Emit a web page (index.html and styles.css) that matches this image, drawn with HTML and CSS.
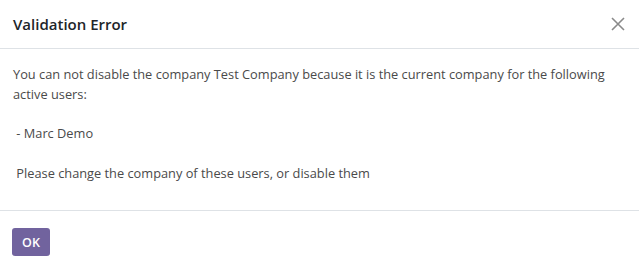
FILE: index.html
```html
<!DOCTYPE html>
<html>
<head>
<meta charset="utf-8">
<link rel="stylesheet" href="styles.css">
</head>
<body>
<div class="modal">
  <header class="modal-header">
    <h4 class="modal-title">Validation Error</h4>
    <button class="btn-close" aria-label="Close">
      <svg width="14" height="14" viewBox="0 0 14 14"><path d="M1 1L13 13M13 1L1 13" stroke="#8a8a8a" stroke-width="1.6" fill="none"/></svg>
    </button>
  </header>
  <main class="modal-body"><p class="msg">You can not disable the company Test Company because it is the current company for the following active users:

 - Marc Demo

 Please change the company of these users, or disable them</p></main>
  <footer class="modal-footer">
    <button class="btn-primary">OK</button>
  </footer>
</div>
</body>
</html>
```
FILE: styles.css
```css
html, body {
  margin: 0;
  padding: 0;
  background: #fff;
}
body {
  font-family: "Open Sans", "Noto Sans", sans-serif;
  color: #4a4a4a;
}
.modal {
  width: 639px;
  display: flex;
  flex-direction: column;
}
.modal-header {
  display: flex;
  align-items: center;
  justify-content: space-between;
  height: 48px;
  padding: 0 13px 0 13px;
  border-bottom: 1px solid #dee2e6;
}
.modal-title {
  margin: 0;
  font-size: 15px;
  font-weight: 600;
  color: #212529;
  padding-top: 0;
}
.btn-close {
  border: 0;
  background: none;
  padding: 0;
  width: 14px;
  height: 14px;
  display: flex;
  margin-right: 1px;
}
.modal-body {
  padding: 16px 13px 27px 13px;
  border-bottom: 1px solid #dee2e6;
}
.msg {
  margin: 0;
  white-space: pre-wrap;
  font-size: 12.8px;
  line-height: 19.7px;
}
.modal-footer {
  padding: 17px 12px;
  display: flex;
}
.btn-primary {
  background: #71639e;
  color: #fff;
  border: 0;
  border-radius: 3px;
  width: 38px;
  height: 28px;
  font-family: "Open Sans", "Noto Sans", sans-serif;
  font-weight: 600;
  font-size: 12.5px;
  padding: 0;
}
```
